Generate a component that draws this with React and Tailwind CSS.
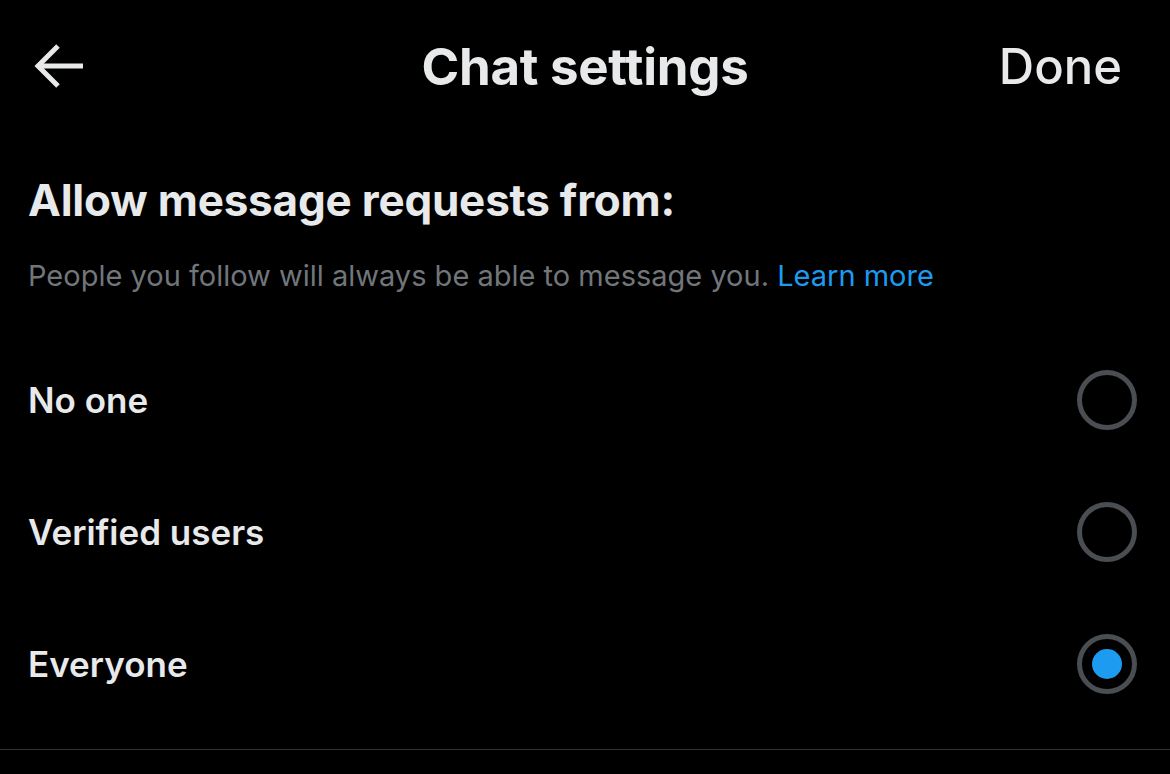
import React from 'react';

const options = [
    { id: 'none', label: 'No one' },
    { id: 'verified', label: 'Verified users' },
    { id: 'everyone', label: 'Everyone' },
];

const Radio = ({ checked }) => (
    <div className="w-[60px] h-[60px] rounded-full border-[5px] border-[#4a4e53] flex items-center justify-center">
        {checked && <div className="w-[30px] h-[30px] rounded-full bg-[#1d9bf0]" />}
    </div>
);

export default function App() {
    const [selected, setSelected] = React.useState('everyone');

    return (
        <div className="w-[1170px] h-[774px] bg-black text-[#e7e9ea] overflow-hidden" style={{ fontFamily: 'Inter, "Noto Sans", sans-serif' }}>
            {/* top bar */}
            <div className="h-[134px] flex items-center justify-between pl-[33px] pr-[48px] relative">
                <svg width="54" height="46" viewBox="0 0 54 46" fill="none" stroke="#e7e9ea" strokeWidth="5" className="mt-[-2px]">
                    <path d="M50 23H6" />
                    <path d="M25 3L5 23l20 20" />
                </svg>
                <h1 className="absolute left-0 right-0 text-center text-[51px] font-bold tracking-[-0.3px] pointer-events-none">Chat settings</h1>
                <button className="text-[49px] font-medium">Done</button>
            </div>

            <div className="px-[28px] pt-[41px]">
                <h2 className="text-[44px] font-bold leading-[50px] tracking-[-0.2px]">Allow message requests from:</h2>
                <p className="mt-[33px] text-[29px] text-[#71767b] leading-[36px]">
                    People you follow will always be able to message you. <span className="text-[#1d9bf0]">Learn more</span>
                </p>
            </div>

            <div className="mt-[40px] pb-[19px] border-b border-[#2f3336]">
                {options.map(o => (
                    <div key={o.id} className="h-[132px] flex items-center justify-between pl-[28px] pr-[33px]" onClick={() => setSelected(o.id)}>
                        <span className="text-[35px] font-semibold">{o.label}</span>
                        <Radio checked={selected === o.id} />
                    </div>
                ))}
            </div>
        </div>
    );
}
